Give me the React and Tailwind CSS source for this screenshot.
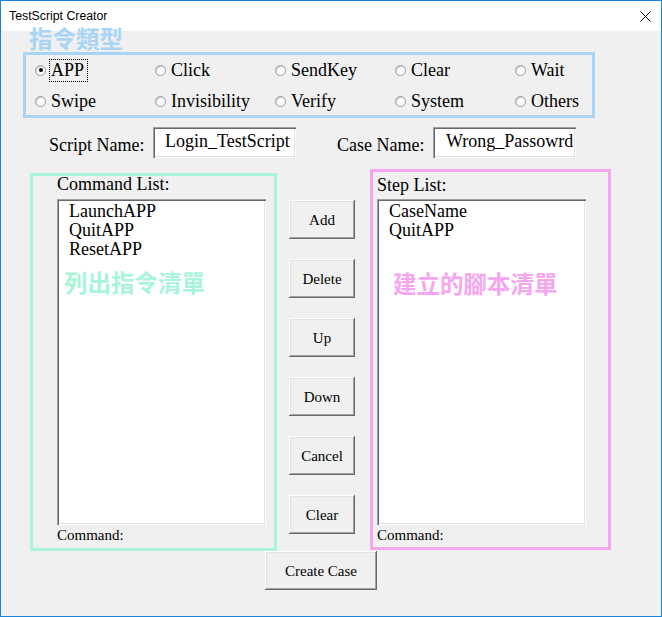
const radios = [
  ['APP', 'Click', 'SendKey', 'Clear', 'Wait'],
  ['Swipe', 'Invisibility', 'Verify', 'System', 'Others'],
]

const raised =
  'bg-[#f0f0f0] shadow-[inset_-1px_-1px_0_#696969,inset_1px_1px_0_#ffffff,inset_-2px_-2px_0_#a0a0a0,inset_2px_2px_0_#e3e3e3]'
const sunken =
  'bg-white shadow-[inset_1px_1px_0_#a0a0a0,inset_2px_2px_0_#696969,inset_-1px_-1px_0_#ffffff,inset_-2px_-2px_0_#e3e3e3]'

function Radio({ label, checked }) {
  return (
    <div className="flex items-center">
      <span className="w-[11px] h-[11px] rounded-full bg-white border border-[#9a9a9a] shadow-[inset_1px_1px_0_#d0d0d0] flex items-center justify-center">
        {checked && <span className="w-[4px] h-[4px] rounded-full bg-black" />}
      </span>
      <span
        className={
          'ml-[3px] pl-[1px] pr-[3px] h-[23px] leading-[21px] text-[18px] border ' +
          (checked ? 'border-dotted border-black' : 'border-transparent')
        }
      >
        {label}
      </span>
    </div>
  )
}

function Button({ children, className = '' }) {
  return (
    <div
      className={`${raised} flex items-center justify-center text-[15px] leading-none ${className}`}
    >
      {children}
    </div>
  )
}

function ListBox({ items, note, noteClass }) {
  return (
    <div className={`${sunken} w-[209px] h-[326px] pt-[3px]`}>
      {items.map((item) => (
        <div key={item} className="pl-[12px] text-[18px] leading-[19px]">
          {item}
        </div>
      ))}
      <div className={noteClass}>{note}</div>
    </div>
  )
}

export default function App() {
  return (
    <div className="w-[662px] h-[617px] border border-[#1a84d8] flex flex-col bg-[#f0f0f0] overflow-hidden">
      <div className="h-[30px] shrink-0 bg-white flex items-center pl-[8px] pr-[10px] font-['Liberation_Sans',sans-serif] text-[12.3px] text-black">
        <span>TestScript Creator</span>
        <svg className="ml-auto" width="11" height="11" viewBox="0 0 11 11">
          <path d="M0.5 0.5 L10.5 10.5 M10.5 0.5 L0.5 10.5" stroke="#000" strokeWidth="1" />
        </svg>
      </div>

      <div className="flex-1 flex flex-col font-['Liberation_Serif',serif] text-black">
        <div className="relative z-10 -mt-[5px] ml-[28px] h-[24px] leading-[24px] text-[23.5px] font-bold text-[#a8d5f5] font-['Noto_Sans_CJK_TC',sans-serif]">
          指令類型
        </div>

        <div className="mt-[2px] ml-[22px] w-[572px] h-[66px] border-[3px] border-[#a8d5f5] pl-[9px] grid grid-cols-[repeat(5,120px)] grid-rows-[30px_32px]">
          {radios.flat().map((label) => (
            <Radio key={label} label={label} checked={label === 'APP'} />
          ))}
        </div>

        <div className="mt-[9px] flex h-[31px] text-[18px]">
          <div className="ml-[48px] w-[104px] mt-[8px] leading-[20px]">Script Name:</div>
          <div className={`${sunken} w-[143px] h-[31px] pl-[12px] pt-[4px] leading-[21px]`}>
            Login_TestScript
          </div>
          <div className="ml-[41px] w-[96px] mt-[8px] leading-[20px]">Case Name:</div>
          <div className={`${sunken} w-[143px] h-[31px] pl-[13px] pt-[4px] leading-[21px] overflow-hidden whitespace-nowrap`}>
            Wrong_Passowrd
          </div>
        </div>

        <div className="mt-[11px] flex items-start">
          <div className="mt-[4px] ml-[29px] w-[247px] h-[378px] border-[3px] border-[#a8f5d9] pl-[24px]">
            <div className="text-[18px] leading-[17px]">Command List:</div>
            <div className="mt-[6px]">
              <ListBox
                items={['LaunchAPP', 'QuitAPP', 'ResetAPP']}
                note="列出指令清單"
                noteClass="mt-[11px] pl-[7px] h-[24px] leading-[24px] text-[23.5px] font-bold text-[#a8f5d9] font-['Noto_Sans_CJK_TC',sans-serif]"
              />
            </div>
            <div className="text-[15px] leading-[20px]">Command:</div>
          </div>

          <div className="ml-[12px] mt-[31px] flex flex-col gap-[20px]">
            {['Add', 'Delete', 'Up', 'Down', 'Cancel', 'Clear'].map((b) => (
              <Button key={b} className="w-[66px] h-[39px] pt-[2px]">
                {b}
              </Button>
            ))}
          </div>

          <div className="ml-[15px] w-[241px] h-[381px] border-[3px] border-[#f5a6ef] pl-[4px]">
            <div className="mt-[3px] text-[18px] leading-[20px]">Step List:</div>
            <div className="mt-[4px]">
              <ListBox
                items={['CaseName', 'QuitAPP']}
                note="建立的腳本清單"
                noteClass="mt-[31px] pl-[16px] h-[24px] leading-[24px] text-[23.5px] font-bold text-[#f5a6ef] font-['Noto_Sans_CJK_TC',sans-serif]"
              />
            </div>
            <div className="text-[15px] leading-[20px]">Command:</div>
          </div>
        </div>

        <Button className="ml-[264px] w-[112px] h-[39px] pt-[2px]">Create Case</Button>
      </div>
    </div>
  )
}
